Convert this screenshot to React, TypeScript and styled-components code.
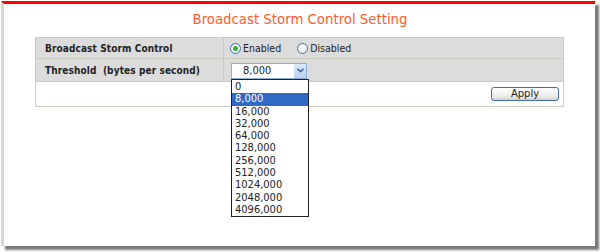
import React from "react";
import styled, { createGlobalStyle } from "styled-components";

const Global = createGlobalStyle`
  html, body { margin: 0; padding: 0; background: #fff; }
  body { width: 600px; height: 252px; overflow: hidden; font-family: "DejaVu Sans", Verdana, sans-serif; }
`;

const Frame = styled.div`
  box-sizing: border-box;
  margin: 1px 0 0 1px;
  width: 594px;
  height: 245px;
  border-top: 3px solid #ff0000;
  border-left: 3px solid #d6d6d6;
  background: #fff;
  box-shadow: 4px 4px 2px #7a7a7a;
  display: flex;
  flex-direction: column;
  align-items: center;
`;

const Title = styled.div`
  margin-top: 8px;
  height: 25px;
  font-size: 13.3px;
  color: #ff5a28;
  margin-left: 1px;
`;

const Table = styled.div`
  position: relative;
  box-sizing: border-box;
  width: 529px;
  border: 1px solid #cbcbbd;
  display: grid;
  grid-template-columns: 188px 1fr;
`;

const LabelCell = styled.div<{ $h: number }>`
  box-sizing: border-box;
  height: ${(p) => p.$h}px;
  background: #dcdcdc;
  border-right: 1px solid #cbcbbd;
  border-bottom: 1px solid #cbcbbd;
  padding-left: 9px;
  display: flex;
  align-items: center;
  font-family: "DejaVu Sans Condensed", "DejaVu Sans", sans-serif;
  font-weight: bold;
  font-size: 10px;
  letter-spacing: 0.1px;
  color: #222;
`;

const ValueCell = styled.div<{ $h: number }>`
  position: relative;
  box-sizing: border-box;
  height: ${(p) => p.$h}px;
  background: #dcdcdc;
  border-bottom: 1px solid #cbcbbd;
  padding-left: 6px;
  display: flex;
  align-items: center;
  font-family: "DejaVu Sans Condensed", "DejaVu Sans", sans-serif;
  font-size: 10.5px;
  color: #222;
`;

const FooterCell = styled.div`
  grid-column: 1 / span 2;
  height: 24px;
  background: #fff;
  display: flex;
  justify-content: flex-end;
  align-items: center;
  padding-right: 4px;
`;

const RadioLabel = styled.label`
  display: flex;
  align-items: center;
  margin-right: 16px;
`;

const RadioCircle = styled.span<{ $on?: boolean }>`
  box-sizing: border-box;
  width: 11px;
  height: 11px;
  border-radius: 50%;
  border: 1px solid #4a6e9c;
  background: radial-gradient(circle at 40% 40%, #ffffff, #dfe6ee);
  margin-right: 2px;
  display: flex;
  align-items: center;
  justify-content: center;
  &::after {
    content: "";
    display: ${(p) => (p.$on ? "block" : "none")};
    width: 5px;
    height: 5px;
    border-radius: 50%;
    background: #2fb52f;
  }
`;

const Select = styled.div`
  box-sizing: border-box;
  width: 76px;
  height: 16px;
  margin-top: 1px;
  margin-left: 1px;
  border: 1px solid #8fb0d6;
  background: #fff;
  display: flex;
  align-items: center;
  justify-content: space-between;
  font-family: "DejaVu Sans Condensed", "DejaVu Sans", sans-serif;
  font-size: 11px;
  color: #222;
  padding-left: 11px;
`;

const Arrow = styled.span`
  width: 12px;
  height: 14px;
  background: linear-gradient(#dbe7f9, #bcd0ee);
  display: flex;
  align-items: center;
  justify-content: center;
`;

const List = styled.div`
  position: absolute;
  left: 7px;
  top: 20px;
  z-index: 2;
  box-sizing: border-box;
  width: 78px;
  border: 1px solid #222;
  background: #fff;
  padding: 1px 0 0;
  font-family: "DejaVu Sans Condensed", "DejaVu Sans", sans-serif;
  font-size: 11px;
  color: #222;
`;

const Item = styled.div<{ $sel?: boolean }>`
  height: 12.3px;
  line-height: 12.3px;
  padding-left: 3px;
  background: ${(p) => (p.$sel ? "#316ac5" : "transparent")};
  color: ${(p) => (p.$sel ? "#fff" : "#222")};
`;

const ApplyButton = styled.button`
  box-sizing: border-box;
  width: 68px;
  height: 14px;
  padding: 0;
  border: 1px solid #3f6db3;
  border-radius: 3px;
  background: linear-gradient(#ffffff, #ecebe6 70%, #d6d0c5);
  font-family: "DejaVu Sans", sans-serif;
  font-size: 10px;
  line-height: 12px;
  color: #222;
`;

const options = ["0", "8,000", "16,000", "32,000", "64,000", "128,000", "256,000", "512,000", "1024,000", "2048,000", "4096,000"];

export default function App() {
  return (
    <>
      <Global />
      <Frame>
        <Title>Broadcast Storm Control Setting</Title>
        <Table>
          <LabelCell $h={21}>Broadcast Storm Control</LabelCell>
          <ValueCell $h={21}>
            <RadioLabel>
              <RadioCircle $on />
              Enabled
            </RadioLabel>
            <RadioLabel>
              <RadioCircle />
              Disabled
            </RadioLabel>
          </ValueCell>
          <LabelCell $h={23}>Threshold&nbsp; (bytes per second)</LabelCell>
          <ValueCell $h={23}>
            <Select>
              8,000
              <Arrow>
                <svg width="7" height="5" viewBox="0 0 7 5">
                  <path d="M0.5 0.8 L3.5 3.8 L6.5 0.8" fill="none" stroke="#3b5c8c" strokeWidth="1.4" />
                </svg>
              </Arrow>
            </Select>
            <List>
              {options.map((o) => (
                <Item key={o} $sel={o === "8,000"}>
                  {o}
                </Item>
              ))}
            </List>
          </ValueCell>
          <FooterCell>
            <ApplyButton>Apply</ApplyButton>
          </FooterCell>
        </Table>
      </Frame>
    </>
  );
}
